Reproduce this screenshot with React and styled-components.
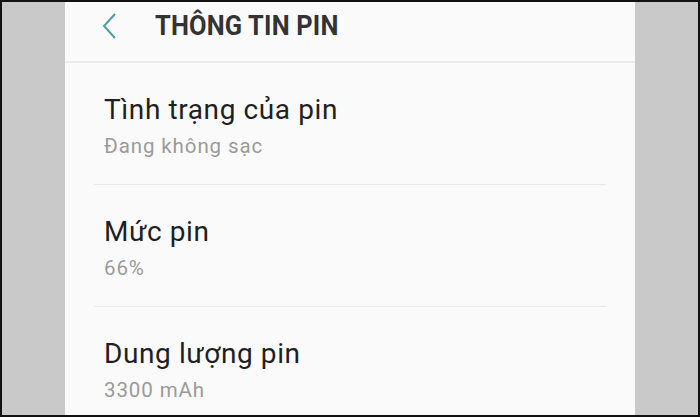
import React from "react"
import styled, { createGlobalStyle } from "styled-components"

const GlobalStyle = createGlobalStyle`
  html, body {
    margin: 0;
    padding: 0;
    background: #000;
  }
`

const Frame = styled.div`
  width: 700px;
  height: 417px;
  box-sizing: border-box;
  border: 2px solid #111;
  background: #c9c9c9;
  display: grid;
  grid-template-columns: 63px 570px 1fr;
  overflow: hidden;
  font-family: Roboto, "Noto Sans", sans-serif;
`

const Panel = styled.div`
  grid-column: 2;
  background: #fafafa;
  display: flex;
  flex-direction: column;
  min-height: 0;
`

const Header = styled.div`
  height: 61px;
  flex-shrink: 0;
  display: flex;
  align-items: center;
  padding-bottom: 12px;
  box-sizing: border-box;
  border-bottom: 2px solid #ececec;
`

const BackButton = styled.div`
  width: 90px;
  display: flex;
  justify-content: flex-start;
  padding-left: 36px;
  box-sizing: border-box;
  align-items: center;
`

const Title = styled.h1`
  margin: 0;
  font-size: 27px;
  font-weight: 700;
  color: #333;
  letter-spacing: 0.2px;
  transform: scaleX(0.94);
  transform-origin: left center;
`

const List = styled.div`
  padding: 0 29px;
`

const Item = styled.div`
  padding: 30px 10px 24px;
  border-bottom: ${(props) => (props.last ? "none" : "1.5px solid #e8e8e8")};
`

const ItemTitle = styled.div`
  font-size: 28px;
  line-height: 34px;
  letter-spacing: 0.6px;
  color: #1f1f1f;
`

const ItemValue = styled.div`
  margin-top: 5px;
  font-size: 20.5px;
  line-height: 28px;
  letter-spacing: 0.9px;
  color: #9a9a9a;
`

const rows = [
  { title: "Tình trạng của pin", value: "Đang không sạc" },
  { title: "Mức pin", value: "66%" },
  { title: "Dung lượng pin", value: "3300 mAh" },
]

const App = () => {
  return (
    <>
      <GlobalStyle />
      <Frame>
        <Panel>
          <Header>
            <BackButton>
              <svg width="16" height="28" viewBox="0 0 16 28">
                <path d="M14 2 L3 14 L14 26" fill="none" stroke="#4d9ba8" strokeWidth="2" />
              </svg>
            </BackButton>
            <Title>THÔNG TIN PIN</Title>
          </Header>
          <List>
            {rows.map((row, i) => (
              <Item key={row.title} last={i === rows.length - 1}>
                <ItemTitle>{row.title}</ItemTitle>
                <ItemValue>{row.value}</ItemValue>
              </Item>
            ))}
          </List>
        </Panel>
      </Frame>
    </>
  )
}

export default App
